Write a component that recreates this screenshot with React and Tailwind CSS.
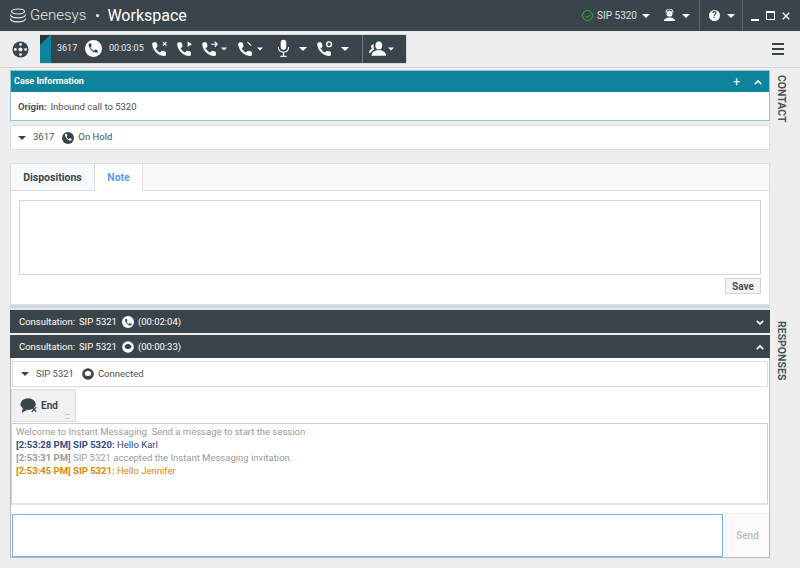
const PHONE = 'M6.62 10.79c1.44 2.83 3.76 5.14 6.59 6.59l2.2-2.2c.27-.27.67-.36 1.02-.24 1.12.37 2.33.57 3.57.57.55 0 1 .45 1 1V20c0 .55-.45 1-1 1-9.39 0-17-7.61-17-17 0-.55.45-1 1-1h3.5c.55 0 1 .45 1 1 0 1.25.2 2.45.57 3.57.11.35.03.74-.25 1.02l-2.2 2.2z';

function Caret({ className = 'border-t-white' }) {
  return <span className={`inline-block w-0 h-0 border-x-[4px] border-x-transparent border-t-[4px] ${className}`} />;
}

// handset with an extra mark at its top right
function CallIcon({ children }) {
  return (
    <svg viewBox="0 0 24 24" className="w-[17px] h-[17px] text-white" fill="currentColor">
      <path d={PHONE} transform="translate(-2 1)" stroke="currentColor" strokeWidth="1.3" />
      {children}
    </svg>
  );
}

function PhoneBadge({ size = 'w-[12px] h-[12px]', bg = 'bg-[#3a454b]', fg = 'white' }) {
  return (
    <span className={`inline-flex items-center justify-center rounded-full ${size} ${bg}`}>
      <svg viewBox="0 0 24 24" className="w-[72%] h-[72%]" fill={fg}><path d={PHONE} /></svg>
    </span>
  );
}

function ChatBubble({ color = '#3a454b', hole = 'white' }) {
  return (
    <svg viewBox="0 0 12 12" className="w-[12px] h-[12px]">
      <circle cx="6" cy="6" r="5.8" fill={color} />
      <ellipse cx="6" cy="5.6" rx="3.3" ry="2.5" fill={hole} />
    </svg>
  );
}

function Chevron({ up }) {
  return (
    <svg viewBox="0 0 10 6" className="w-[8px] h-[5px]" fill="none" stroke="white" strokeWidth="2">
      <path d={up ? 'M1 5l4-4 4 4' : 'M1 1l4 4 4-4'} />
    </svg>
  );
}

function Agent({ className = 'w-[17px] h-[15px]' }) {
  return (
    <svg viewBox="0 0 20 17" className={className} fill="white">
      <ellipse cx="11.5" cy="5" rx="4" ry="4.8" />
      <path d="M3 17c0-4 3.5-5.5 6-6.3h5c2.5.8 6 2.3 6 6.3z" />
      <path d="M5.5 3.5c-2 0-3 1.5-3 3 0 1 .5 2 1.2 2.6C1.5 10 0 11 0 13.5h2.2c.5-1.6 2-2.8 3.8-3.6-.7-1.5-.8-3.8-.5-6.4z" />
    </svg>
  );
}

function Toolbar() {
  return (
    <div className="h-[37px] flex items-center bg-[#eeeeee] border-b border-[#d5d5d5] shrink-0">
      <div className="w-[40px] flex justify-center">
        <svg viewBox="0 0 18 18" className="w-[17px] h-[17px]">
          <circle cx="9" cy="9" r="8.5" fill="#3a454b" />
          <circle cx="9" cy="9" r="2.2" fill="#eeeeee" />
          <circle cx="9" cy="3.6" r="1.5" fill="#eeeeee" />
          <circle cx="9" cy="14.4" r="1.5" fill="#eeeeee" />
          <circle cx="3.6" cy="9" r="1.5" fill="#eeeeee" />
          <circle cx="14.4" cy="9" r="1.5" fill="#eeeeee" />
        </svg>
      </div>
      <div className="h-[30px] w-[367px] bg-[#3a454b] flex items-center text-[#e8eaeb] border border-[#d8d8d8] border-l-0 -mt-[1px]">
        <div className="relative w-[11px] h-full bg-[#0e839c] shrink-0">
          <div className="absolute top-0 left-0 border-t-[10px] border-t-[#2b3338] border-r-[10px] border-r-transparent" />
        </div>
        <span className="ml-[6px] text-[9px] w-[20px]">3617</span>
        <span className="ml-[8px] flex"><PhoneBadge size="w-[17px] h-[17px]" bg="bg-white" fg="#3a454b" /></span>
        <span className="ml-[7px] text-[9px] w-[36px]">00:03:05</span>
        <span className="ml-[7px] flex">
          <CallIcon><path d="M15.500 3l5 5M20.500 3l-5 5" stroke="currentColor" strokeWidth="1.8" /></CallIcon>
        </span>
        <span className="ml-[8px] flex">
          <CallIcon><path d="M15 2v8l6-4z" /></CallIcon>
        </span>
        <span className="ml-[8px] flex items-center gap-[1px]">
          <CallIcon><path d="M13 6h8M18 2.500l3.500 3.500-3.500 3.500" stroke="currentColor" strokeWidth="1.7" fill="none" /></CallIcon>
          <Caret className="border-t-white scale-75" />
        </span>
        <span className="ml-[10px] flex items-center gap-[1px]">
          <CallIcon><path d="M13.500 3l5 5" stroke="currentColor" strokeWidth="1.6" fill="none" /></CallIcon>
          <Caret className="border-t-white scale-75" />
        </span>
        <span className="ml-[13px] flex">
          <svg viewBox="0 0 14 20" className="w-[13px] h-[19px]" fill="white">
            <rect x="4" y="0.5" width="6" height="11" rx="3" />
            <path d="M1.5 8.5c0 3.5 2.3 5.5 5.5 5.5s5.500-2 5.500-5.500" fill="none" stroke="white" strokeWidth="1.2" />
            <rect x="6.300" y="14" width="1.400" height="4" />
            <rect x="3.500" y="17.800" width="7" height="1.200" />
          </svg>
        </span>
        <span className="ml-[9px] flex"><Caret /></span>
        <span className="ml-[10px] flex">
          <CallIcon><circle cx="17" cy="6" r="3.400" fill="none" stroke="currentColor" strokeWidth="2" /></CallIcon>
        </span>
        <span className="ml-[7px] flex"><Caret /></span>
        <div className="ml-[13px] self-stretch w-px bg-[#6f7a80]" />
        <span className="ml-[6px] flex items-center gap-[1px]">
          <Agent />
          <Caret className="border-t-white scale-75" />
        </span>
      </div>
      <div className="ml-auto mr-[16px] flex flex-col gap-[2.500px]">
        <div className="w-[12px] h-[2.500px] bg-[#3a454b]" />
        <div className="w-[12px] h-[2.500px] bg-[#3a454b]" />
        <div className="w-[12px] h-[2.500px] bg-[#3a454b]" />
      </div>
    </div>
  );
}

function Header() {
  return (
    <header className="h-[31px] bg-[#3a454b] flex items-center text-white shrink-0">
      <svg viewBox="0 0 18 16" className="ml-[9px] w-[18px] h-[16px]" fill="none" stroke="#e4e7e8" strokeWidth="1.200">
        <ellipse cx="9" cy="3.500" rx="6.500" ry="2.500" />
        <path d="M1.500 6.500c0 2 3 3.300 7.500 3.300s7.500-1.300 7.500-3.300" />
        <path d="M1.500 10.500c0 2 3 3.300 7.500 3.300s7.500-1.300 7.500-3.300" />
      </svg>
      <span className="ml-[3px] text-[15px] font-light text-[#e4e7e8]">Genesys</span>
      <span className="ml-[10px] w-[3px] h-[3px] rounded-full bg-white" />
      <span className="ml-[8px] text-[16px]">Workspace</span>
      <div className="ml-auto flex items-center h-full">
        <span className="w-[11px] h-[11px] rounded-full border-[1.500px] border-[#2fb344] flex items-center justify-center">
          <svg viewBox="0 0 8 8" className="w-[6px] h-[6px]" fill="none" stroke="#2fb344" strokeWidth="1.200"><path d="M1 4l2 2 4-4" /></svg>
        </span>
        <span className="ml-[4px] text-[10px] text-[#dfe3e4]">SIP 5320</span>
        <span className="ml-[5px] flex"><Caret /></span>
        <span className="ml-[13px] flex">
          <svg viewBox="0 0 14 14" className="w-[13px] h-[13px]" fill="white">
            <circle cx="7" cy="5" r="3.200" />
            <path d="M3 5a4 4 0 018 0" fill="none" stroke="white" strokeWidth="1" transform="translate(0 -1)" />
            <path d="M1 13c0-2.500 3-3.800 6-3.800s6 1.300 6 3.800z" />
          </svg>
        </span>
        <span className="ml-[6px] flex"><Caret /></span>
        <div className="ml-[9px] w-px h-full bg-[#5a656b]" />
        <span className="ml-[9px] w-[11px] h-[11px] rounded-full bg-white text-[#3a454b] text-[9px] font-bold flex items-center justify-center">?</span>
        <span className="ml-[7px] flex"><Caret /></span>
        <div className="ml-[7px] w-px h-full bg-[#5a656b]" />
        <div className="ml-[8px] w-[8px] h-[2px] bg-white mt-[9px]" />
        <div className="ml-[7px] w-[9px] h-[9px] border border-t-2 border-white" />
        <svg viewBox="0 0 10 10" className="ml-[7px] mr-[10px] w-[8px] h-[8px]" stroke="white" strokeWidth="1.600"><path d="M1 1l8 8M9 1l-8 8" /></svg>
      </div>
    </header>
  );
}

function DarkBar({ time, chat, up }) {
  return (
    <div className="h-[23px] bg-[#3a454b] flex items-center text-[9.500px] text-white pl-[9px] pr-[6px] pt-[1px] shrink-0">
      <span>Consultation:</span>
      <span className="ml-[4px]">SIP 5321</span>
      <span className="ml-[5px] flex">{chat ? <ChatBubble color="white" hole="#3a454b" /> : <PhoneBadge bg="bg-white" fg="#3a454b" />}</span>
      <span className="ml-[4px]">{time}</span>
      <span className="ml-auto flex"><Chevron up={up} /></span>
    </div>
  );
}

function Panel() {
  return (
    <div className="flex-1 flex flex-col min-h-0 border-x border-b border-[#b5b9bb] bg-white">
      <div className="mt-[3px] mx-[1px] h-[26px] flex items-center border border-[#e0e0e0] text-[9.500px] text-[#4a5257] shrink-0 pl-[8px]">
        <Caret className="border-t-[#3a454b]" />
        <span className="ml-[7px]">SIP 5321</span>
        <span className="ml-[8px] flex"><ChatBubble /></span>
        <span className="ml-[4px]">Connected</span>
      </div>
      <div className="h-[34px] shrink-0 mt-[2px] relative">
        <div className="w-[65px] h-[33px] bg-[#f1f1f1] border border-[#e0e0e0] flex items-center pl-[8px] relative">
          <svg viewBox="0 0 20 18" className="w-[18px] h-[17px]">
            <ellipse cx="9" cy="7.500" rx="8.500" ry="6.500" fill="#3a454b" />
            <path d="M3 12l-1 5 6-3z" fill="#3a454b" />
            <path d="M13 11l5 5M18 11l-5 5" stroke="#3a454b" strokeWidth="1.400" />
          </svg>
          <span className="ml-[3px] text-[10px] font-bold text-[#3a454b]">End</span>
          <span className="absolute right-[5px] bottom-[2px] w-[5px] h-[5px] border-y border-[#cccccc]" />
        </div>
      </div>
      <div className="h-[82px] shrink-0 border border-[#d0d0d0] border-b-[2px] border-b-[#e4e4e4] mr-[1px] pl-[4px] pt-[1px] text-[9.500px] leading-[13px] text-[#9a9a9a]">
        <div>Welcome to Instant Messaging. Send a message to start the session</div>
        <div className="text-[#2f4a7f]"><span className="font-bold">[2:53:28 PM] SIP 5320:</span> Hello Karl</div>
        <div><span className="font-bold">[2:53:31 PM]</span> SIP 5321 accepted the Instant Messaging invitation.</div>
        <div className="text-[#e08600]"><span className="font-bold">[2:53:45 PM] SIP 5321:</span> Hello Jennifer</div>
      </div>
      <div className="flex-1 flex pt-[9px] pl-[1px]">
        <div className="flex-1 border border-[#7fb0f5]" />
        <div className="w-[44px] ml-[2px] -mt-[1px] bg-[#fdf9fd] border-l border-t border-[#eeeeee] flex items-center justify-center text-[10px] font-medium text-[#b9b9b9]">Send</div>
      </div>
    </div>
  );
}

export default function App() {
  return (
    <div className="w-[800px] h-[568px] flex flex-col bg-[#eeeeee] font-['Roboto',sans-serif] overflow-hidden">
      <Header />
      <Toolbar />
      <div className="flex-1 flex min-h-0">
        <main className="w-[760px] ml-[10px] flex flex-col pt-[2px] pb-[10px] min-h-0">
          <div className="border border-[#8fc4d2] bg-white shrink-0">
            <div className="h-[21px] bg-[#0e839c] flex items-center text-white text-[9px] font-bold pl-[3px] pr-[7px] pt-[1px]">
              <span>Case Information</span>
              <span className="ml-auto text-[12px] font-normal leading-none">+</span>
              <span className="ml-[14px] flex"><Chevron up /></span>
            </div>
            <div className="h-[28px] flex items-center pl-[7px] text-[9.500px] text-[#4a5257] pt-[2px]">
              <span className="font-bold">Origin:</span>
              <span className="ml-[4px]">Inbound call to 5320</span>
            </div>
          </div>
          <div className="mt-[4px] h-[25px] shrink-0 bg-white border border-[#dddddd] flex items-center pl-[7px] text-[9.500px] text-[#4a5257]">
            <Caret className="border-t-[#3a454b]" />
            <span className="ml-[7px]">3617</span>
            <span className="ml-[8px] flex"><PhoneBadge /></span>
            <span className="ml-[4px]">On Hold</span>
          </div>
          <div className="mt-[13px] h-[142px] shrink-0 bg-white border border-[#dddddd] flex flex-col">
            <div className="h-[27px] flex bg-[#f7fafd] border-b border-[#dddddd] shrink-0 text-[10.500px] font-bold">
              <div className="w-[83px] pt-[1px] flex items-center justify-center text-[#3a454b]">Dispositions</div>
              <div className="w-[49px] pt-[1px] -mb-px flex items-center justify-center bg-white border-x border-[#dddddd] text-[#5b9cf6]">Note</div>
            </div>
            <div className="mx-[8px] mt-[9px] h-[75px] border border-[#d5d5d5] shrink-0" />
            <div className="flex justify-end mr-[8px] mt-[3px]">
              <div className="w-[36px] h-[16px] bg-[#f3f3f3] border border-[#d5d5d5] flex items-center justify-center text-[10px] font-bold text-[#4a5257]">Save</div>
            </div>
          </div>
          <div className="h-[5px] shrink-0 bg-[#c9d7e6] border-b-2 border-[#e6e6e6]" />
          <DarkBar time="(00:02:04)" />
          <div className="h-[2px] shrink-0" />
          <DarkBar time="(00:00:33)" chat up />
          <Panel />
        </main>
        <aside className="w-[30px] flex flex-col items-center pr-[8px] text-[10.500px] font-bold text-[#4a5257]">
          <span className="mt-[7px] [writing-mode:vertical-rl]">CONTACT</span>
          <span className="mt-[198px] [writing-mode:vertical-rl]">RESPONSES</span>
        </aside>
      </div>
    </div>
  );
}
